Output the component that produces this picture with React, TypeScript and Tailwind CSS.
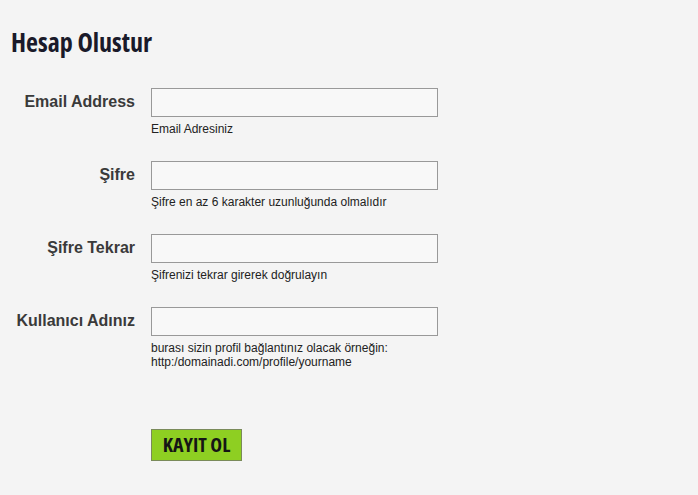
export default function App() {
  const rows = [
    { label: "Email Address", help: ["Email Adresiniz"], type: "text" },
    { label: "Şifre", help: ["Şifre en az 6 karakter uzunluğunda olmalıdır"], type: "password" },
    { label: "Şifre Tekrar", help: ["Şifrenizi tekrar girerek doğrulayın"], type: "password" },
    {
      label: "Kullanıcı Adınız",
      help: ["burası sizin profil bağlantınız olacak örneğin:", "http:/domainadi.com/profile/yourname"],
      type: "text",
    },
  ];

  return (
    <div className="min-h-[495px] bg-[#f4f4f4] font-['Liberation_Sans',Arial,sans-serif] text-[#333]">
      <div className="px-[11px] pt-[26px]">
        <h1 className="font-['Open_Sans',sans-serif] font-bold font-stretch-semi-condensed text-[26px] leading-[32px] text-[#1a1a2a]">
          Hesap Olustur
        </h1>
      </div>
      <form className="mt-[30px] flex flex-col">
        {rows.map((r) => (
          <div key={r.label} className="flex min-h-[73px]">
            <label className="w-[136px] shrink-0 pr-[1px] pt-[4px] text-right text-[16px] font-bold leading-[20px] text-[#3a3a3a]">
              {r.label}
            </label>
            <div className="ml-[15px] flex flex-col">
              <input
                type={r.type}
                className="h-[29px] w-[287px] border border-[#999] bg-[#f8f8f8] outline-none"
              />
              <div className="mt-[5px] text-[12px] leading-[14px] text-[#222]">
                {r.help.map((h) => (
                  <div key={h}>{h}</div>
                ))}
              </div>
            </div>
          </div>
        ))}
        <div className="ml-[151px] mt-[49px]">
          <button
            type="button"
            className="h-[32px] w-[91px] border border-[#7a8a5a] bg-[#8ecf22] font-['Open_Sans',sans-serif] font-bold font-stretch-semi-condensed text-[20px] leading-[30px] text-[#151515]"
          >
            KAYIT OL
          </button>
        </div>
      </form>
    </div>
  );
}
